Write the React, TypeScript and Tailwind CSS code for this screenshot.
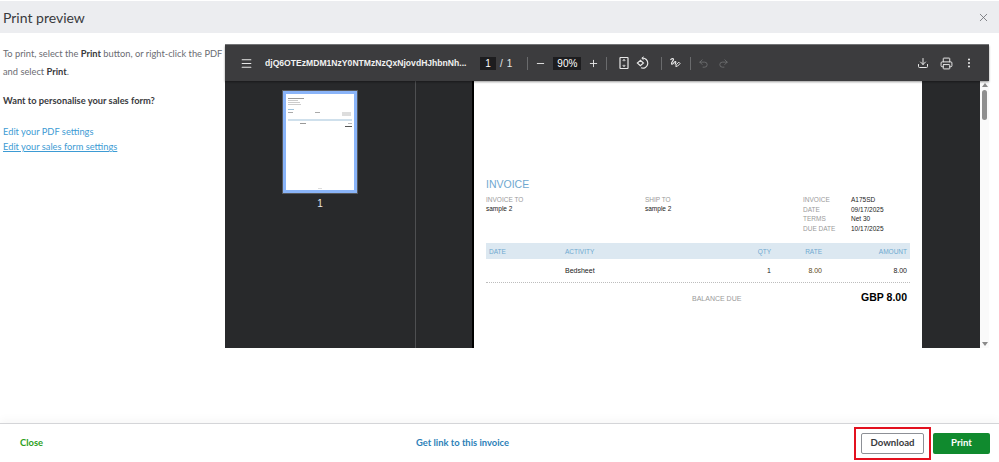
import { Download, Menu, Minus, MoreVertical, Plus, Printer, Redo2, Undo2, X } from 'lucide-react'

const metaRows = [
    ['INVOICE', 'A175SD'],
    ['DATE', '09/17/2025'],
    ['TERMS', 'Net 30'],
    ['DUE DATE', '10/17/2025'],
]

function Separator({ className }: { className: string }) {
    return <div className={`w-px h-[13px] bg-[#6a6b6d] shrink-0 ${className}`} />
}

function Toolbar() {
    return (
        <div className="h-[36px] shrink-0 bg-[#3c3c3e] flex items-center text-white shadow-[0_1px_2px_rgba(0,0,0,0.4)] z-10 font-['Liberation_Sans',sans-serif]">
            <Menu className="w-[13px] h-[13px] ml-[15px] shrink-0 text-[#e8e8e8]" strokeWidth={2} />
            <span className="ml-[12px] w-[202px] whitespace-nowrap overflow-hidden text-[8.6px] font-bold text-[#f1f1f1]">
                djQ6OTEzMDM1NzY0NTMzNzQxNjovdHJhbnNh...
            </span>
            <div className="ml-[13px] w-[16px] h-[13px] bg-[#1d1d1f] text-[10px] leading-[13px] text-center">1</div>
            <span className="ml-[4px] text-[10px] text-[#e8e8e8]">/</span>
            <span className="ml-[4px] text-[10px] text-[#e8e8e8]">1</span>
            <Separator className="ml-[15px]" />
            <Minus className="w-[11px] h-[11px] ml-[7px] shrink-0 text-[#e8e8e8]" strokeWidth={2} />
            <div className="ml-[7px] w-[28px] h-[13px] bg-[#1d1d1f] text-[10px] leading-[13px] text-center">90%</div>
            <Plus className="w-[11px] h-[11px] ml-[7px] shrink-0 text-[#e8e8e8]" strokeWidth={2} />
            <Separator className="ml-[7px]" />
            {/* fit to page */}
            <svg className="ml-[11px] shrink-0" width="12" height="14" viewBox="0 0 12 14" fill="none" stroke="#e8e8e8" strokeWidth="1.2">
                <rect x="2" y="1.5" width="8" height="11" rx="0.5" />
                <path d="M6 3.5v1.8M6 8.7v1.8M4.8 4.8 6 3.4l1.2 1.4M4.8 9.2 6 10.6l1.2-1.4" strokeWidth="0.9" />
            </svg>
            {/* rotate */}
            <svg className="ml-[6px] shrink-0" width="14" height="14" viewBox="0 0 14 14" fill="none" stroke="#e8e8e8" strokeWidth="1.2">
                <path d="M6 2.2A5 5 0 1 1 5 11.8" />
                <path d="M7.6.8 5.8 2.3l1.8 1.5" strokeWidth="1" />
                <path d="M4.4 4.4 1.4 7l3 2.6L7.4 7z" />
            </svg>
            <Separator className="ml-[11px]" />
            {/* annotate */}
            <svg className="ml-[7px] shrink-0" width="12" height="12" viewBox="0 0 12 12" fill="none" stroke="#e8e8e8" strokeWidth="1.2">
                <path d="M1.5 3c1-1.6 3-1.7 3-.5S1.5 6 2.6 7s3-3 4-2.4-1 2.6-.2 3" />
                <path d="m6.8 9.5.4-1.8 2.6-2.5 1.3 1.3-2.5 2.6z" strokeWidth="1" />
            </svg>
            <Separator className="ml-[9px]" />
            <Undo2 className="w-[11px] h-[11px] ml-[7px] shrink-0 text-[#77787a]" strokeWidth={1.6} />
            <Redo2 className="w-[11px] h-[11px] ml-[9px] shrink-0 text-[#77787a]" strokeWidth={1.6} />
            <div className="ml-auto flex items-center">
                <Download className="w-[12px] h-[12px] text-[#e8e8e8]" strokeWidth={2} />
                <Printer className="w-[13px] h-[13px] ml-[11px] text-[#e8e8e8]" strokeWidth={1.8} />
                <MoreVertical className="w-[12px] h-[12px] ml-[10px] mr-[14px] text-[#e8e8e8]" strokeWidth={2.2} />
            </div>
        </div>
    )
}

function Thumbnail() {
    return (
        <div className="w-[191px] shrink-0 border-r border-[#4e4f51] flex flex-col items-center pt-[9px]">
            <div className="w-[76px] h-[104px] border border-[#56585c] bg-[#8ab4f8] p-[3px]">
                <div className="w-full h-full bg-white px-[2px] pt-[4px] flex flex-col">
                    <div className="w-[16px] h-[1px] bg-[#999]" />
                    <div className="mt-[1px] w-[10px] h-[1px] bg-[#ccc]" />
                    <div className="mt-[1px] w-[12px] h-[1px] bg-[#ccc]" />
                    <div className="mt-[1px] w-[13px] h-[1px] bg-[#ccc]" />
                    <div className="mt-[4px] w-[6px] h-[1px] bg-[#9cc3de]" />
                    <div className="mt-[2px] flex justify-between pr-[1px]">
                        <div className="w-[5px] h-[1px] bg-[#aaa]" />
                        <div className="w-[5px] h-[1px] bg-[#aaa]" />
                        <div className="w-[9px] h-[4px] bg-[#ddd]" />
                    </div>
                    <div className="mt-[3px] h-[2px] bg-[#cfe0ec]" />
                    <div className="mt-[2px] flex justify-between">
                        <div className="ml-[12px] w-[6px] h-[1px] bg-[#999]" />
                        <div className="w-[4px] h-[1px] bg-[#bbb]" />
                    </div>
                    <div className="mt-[2px] ml-auto w-[7px] h-[1px] bg-[#555]" />
                    <div className="mt-auto mb-[1px] mx-auto w-[4px] h-[1px] bg-[#ddd]" />
                </div>
            </div>
            <span className="mt-[2px] text-[10px] text-[#e8e8e8] font-['Liberation_Sans',sans-serif]">1</span>
        </div>
    )
}

function InvoicePage() {
    return (
        <div className="w-[450px] h-[267px] shrink-0 ml-[56px] bg-white border-l-2 border-black pl-[12px] pr-[12px] pt-[97px] overflow-hidden font-['Liberation_Sans',sans-serif] text-[7px] leading-[9px] text-[#222]">
            <div className="text-[10.5px] leading-[12px] text-[#6fa8d0]">INVOICE</div>
            <div className="mt-[5px] h-[48px] flex text-[6.5px] text-[#9a9a9a]">
                <div className="w-[159px]">
                    <div>INVOICE TO</div>
                    <div className="text-[#222]">sample 2</div>
                </div>
                <div className="w-[158px]">
                    <div>SHIP TO</div>
                    <div className="text-[#222]">sample 2</div>
                </div>
                <div className="flex flex-col">
                    {metaRows.map(([label, value]) => (
                        <div key={label} className="flex h-[9.5px]">
                            <span className="w-[48px]">{label}</span>
                            <span className="text-[#222]">{value}</span>
                        </div>
                    ))}
                </div>
            </div>
            <div className="h-[16px] flex items-center bg-[#dce8f1] text-[6.5px] text-[#6fa8d0] px-[3px]">
                <span className="w-[76px]">DATE</span>
                <span className="w-[100px]">ACTIVITY</span>
                <span className="w-[106px] text-right">QTY</span>
                <span className="w-[51px] text-right">RATE</span>
                <span className="w-[85px] text-right">AMOUNT</span>
            </div>
            <div className="h-[24px] flex items-center border-b border-dotted border-[#bdbdbd] px-[3px]">
                <span className="w-[76px]" />
                <span className="w-[100px]">Bedsheet</span>
                <span className="w-[106px] text-right">1</span>
                <span className="w-[51px] text-right text-[#5a4a20]">8.00</span>
                <span className="w-[85px] text-right">8.00</span>
            </div>
            <div className="mt-[8px] flex items-center pr-[3px]">
                <span className="ml-[206px] mt-[2px] text-[#9a9a9a]">BALANCE DUE</span>
                <span className="ml-auto text-[10.5px] leading-[12px] font-bold text-black">GBP 8.00</span>
            </div>
        </div>
    )
}

export default function App() {
    return (
        <div className="w-[999px] h-[462px] bg-white flex flex-col overflow-hidden font-['Lato',sans-serif]">
            <div className="mt-[1px] h-[32px] shrink-0 bg-[#ecedf0] flex items-center justify-between pl-[3px] pr-[9px]">
                <h1 className="text-[14px] text-[#393a3d]">Print preview</h1>
                <X className="w-[13px] h-[13px] text-[#6b6c72]" strokeWidth={1.5} />
            </div>

            <div className="h-[304px] mt-[11px] shrink-0 flex">
                <div className="w-[225px] shrink-0 pl-[3px] pt-[1px] text-[9.3px] text-[#6b6c72]">
                    <p className="leading-[18px]">
                        To print, select the <b className="font-bold text-[#393a3d]">Print</b> button, or right-click the PDF and select <b className="font-bold text-[#393a3d]">Print</b>.
                    </p>
                    <p className="mt-[11px] leading-[18px] font-bold text-[#393a3d]">Want to personalise your sales form?</p>
                    <p className="mt-[14px] leading-[15px] text-[#3d9bd4]">Edit your PDF settings</p>
                    <p className="leading-[15px] text-[#3d9bd4] underline">Edit your sales form settings</p>
                </div>

                <div className="w-[764px] shrink-0 flex flex-col border-t border-[#77787a] bg-[#28292b]">
                    <Toolbar />
                    <div className="flex-1 flex min-h-0 overflow-hidden">
                        <Thumbnail />
                        <InvoicePage />
                        <div className="flex-1" />
                        <div className="w-[9px] shrink-0 bg-[#fafafa] flex flex-col items-center justify-between py-[2px]">
                            <div className="flex flex-col items-center">
                                <div className="w-0 h-0 border-x-[3px] border-x-transparent border-b-[4px] border-b-[#8a8a8a]" />
                                <div className="mt-[3px] w-[5px] h-[30px] rounded-[3px] bg-[#8f8f8f]" />
                            </div>
                            <div className="w-0 h-0 border-x-[3px] border-x-transparent border-t-[4px] border-t-[#8a8a8a]" />
                        </div>
                    </div>
                </div>
            </div>

            <div className="flex-1" />

            <div className="h-[39px] shrink-0 border-t border-[#d4d5d8] shadow-[0_-4px_8px_rgba(0,0,0,0.03)] flex items-center pl-[20px] pr-[9px] text-[9.4px]">
                <span className="font-bold text-[#2ca01c] w-[396px]">Close</span>
                <span className="font-bold text-[#2c7fb8]">Get link to this invoice</span>
                <div className="ml-auto flex items-center">
                    <div className="border-2 border-[#e3111f] px-[5px] py-[4px]">
                        <div className="w-[63px] h-[21px] border border-[#8d9096] rounded-[2px] flex items-center justify-center text-[9.6px] font-bold text-[#393a3d]">
                            Download
                        </div>
                    </div>
                    <div className="ml-[2px] w-[57px] h-[21px] rounded-[2px] bg-[#108a2e] flex items-center justify-center text-[9.6px] font-bold text-white">
                        Print
                    </div>
                </div>
            </div>
        </div>
    )
}
